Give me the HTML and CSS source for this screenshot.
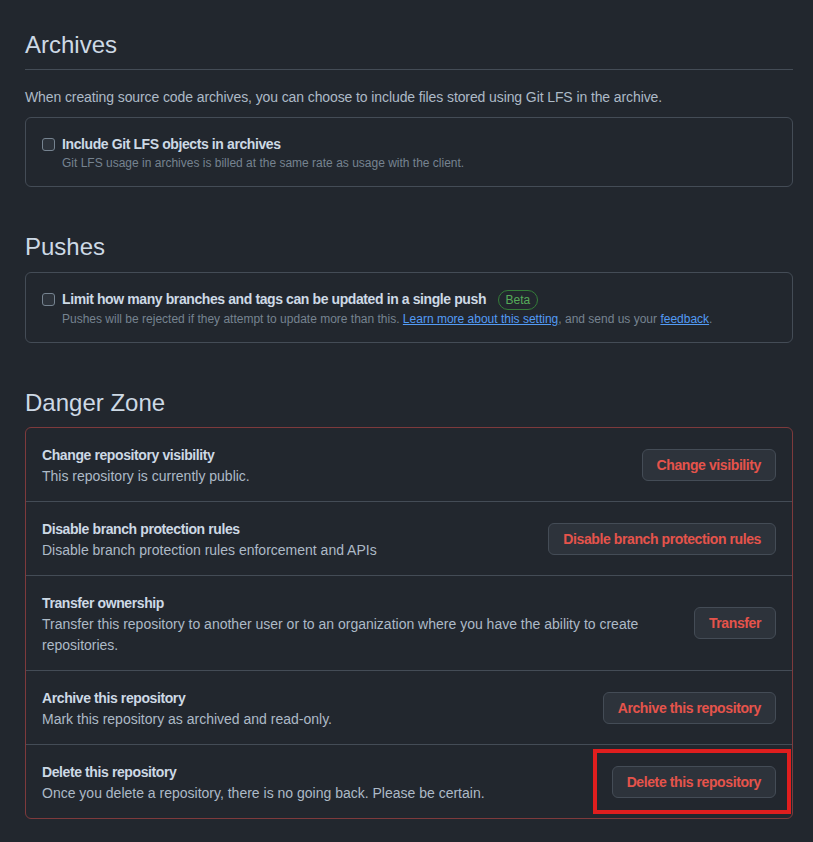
FILE: index.html
```html
<!DOCTYPE html>
<html lang="en">
<head>
  <meta charset="UTF-8">
  <meta name="viewport" content="width=device-width, initial-scale=1.0">
  <title>Repository settings</title>
  <link rel="stylesheet" href="styles.css">
</head>
<body>
  <div class="page">
    <h2 class="subhead with-line">Archives</h2>
    <p class="lead">When creating source code archives, you can choose to include files stored using Git LFS in the archive.</p>
    <div class="box">
      <label class="check">
        <input type="checkbox">
        <span>
          <span class="check-title">Include Git LFS objects in archives</span>
          <span class="note">Git LFS usage in archives is billed at the same rate as usage with the client.</span>
        </span>
      </label>
    </div>

    <h2 class="subhead pushes">Pushes</h2>
    <div class="box">
      <label class="check">
        <input type="checkbox">
        <span>
          <span class="check-title">Limit how many branches and tags can be updated in a single push <span class="beta">Beta</span></span>
          <span class="note">Pushes will be rejected if they attempt to update more than this. <a href="#">Learn more about this setting</a>, and send us your <a href="#">feedback</a>.</span>
        </span>
      </label>
    </div>

    <h2 class="subhead danger-head">Danger Zone</h2>
    <div class="danger">
      <div class="danger-row">
        <div class="info">
          <strong>Change repository visibility</strong>
          <p>This repository is currently public.</p>
        </div>
        <button class="btn-danger">Change visibility</button>
      </div>
      <div class="danger-row">
        <div class="info">
          <strong>Disable branch protection rules</strong>
          <p>Disable branch protection rules enforcement and APIs</p>
        </div>
        <button class="btn-danger">Disable branch protection rules</button>
      </div>
      <div class="danger-row">
        <div class="info">
          <strong>Transfer ownership</strong>
          <p>Transfer this repository to another user or to an organization where you have the ability to create repositories.</p>
        </div>
        <button class="btn-danger">Transfer</button>
      </div>
      <div class="danger-row">
        <div class="info">
          <strong>Archive this repository</strong>
          <p>Mark this repository as archived and read-only.</p>
        </div>
        <button class="btn-danger">Archive this repository</button>
      </div>
      <div class="danger-row">
        <div class="info">
          <strong>Delete this repository</strong>
          <p>Once you delete a repository, there is no going back. Please be certain.</p>
        </div>
        <div class="highlight">
          <button class="btn-danger">Delete this repository</button>
        </div>
      </div>
    </div>
  </div>
</body>
</html>
```

FILE: styles.css
```css
body {
  margin: 0;
  background-color: #22272e;
  color: #adbac7;
  font-family: "Liberation Sans", Arial, sans-serif;
  font-size: 14px;
  line-height: 1.5;
}
.page {
  padding: 27px 20px 22px 25px;
}
.subhead {
  margin: 0;
  font-size: 24px;
  font-weight: 400;
  line-height: 36px;
  color: #cdd9e5;
  padding-bottom: 6px;
}
.with-line {
  border-bottom: 1px solid #444c56;
}
.pushes {
  margin-top: 42px;
  padding-bottom: 7px;
}
.danger-head {
  margin-top: 42px;
  padding-bottom: 6px;
}
.lead {
  margin: 17px 0 9px;
  line-height: 21px;
  letter-spacing: -0.1px;
}
.box {
  border: 1px solid #444c56;
  border-radius: 6px;
  padding: 16px 16px 14px;
}
.check {
  display: flex;
  align-items: flex-start;
  gap: 7px;
}
.check input {
  margin: 4px 0 0 0;
  width: 13px;
  height: 13px;
  appearance: none;
  border: 1px solid #768390;
  border-radius: 3px;
  background: #2d333b;
}
.check-title {
  display: block;
  font-weight: 700;
  line-height: 20px;
  letter-spacing: -0.4px;
  color: #cdd9e5;
}
.note {
  display: block;
  font-size: 12px;
  line-height: 18px;
  color: #768390;
}
.note a {
  color: #539bf5;
  text-decoration: underline;
}
.beta {
  display: inline-block;
  margin-left: 8px;
  padding: 0 7px;
  border: 1px solid #347d39;
  border-radius: 2em;
  color: #57ab5a;
  font-size: 12px;
  font-weight: 400;
  line-height: 18px;
  letter-spacing: 0;
}
.danger {
  border: 1px solid #7e3a3c;
  border-radius: 6px;
}
.danger-row {
  display: flex;
  align-items: center;
  justify-content: space-between;
  gap: 16px;
  padding: 17px 16px 14px;
  border-top: 1px solid #444c56;
}
.danger-row:first-child {
  border-top: none;
}
.info strong {
  display: block;
  font-weight: 700;
  line-height: 21px;
  letter-spacing: -0.4px;
  color: #cdd9e5;
}
.info p {
  margin: 0;
  line-height: 21px;
}
.btn-danger {
  flex-shrink: 0;
  height: 32px;
  padding: 0 14px;
  font-family: inherit;
  font-size: 14px;
  font-weight: 700;
  letter-spacing: -0.4px;
  color: #e5534b;
  background-color: #2d333b;
  border: 1px solid #444c56;
  border-radius: 6px;
}
.danger-row > .btn-danger {
  margin-top: -3px;
}
.highlight {
  margin: -13px -15px -10px 0;
  padding: 13px 11px 12px 15px;
  border: 4px solid #e01e1e;
}
```
